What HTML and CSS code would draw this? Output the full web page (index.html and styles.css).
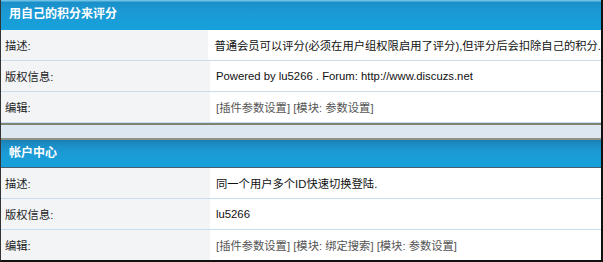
FILE: index.html
```html
<!DOCTYPE html>
<html lang="zh-CN">

<head>
    <meta charset="UTF-8">
    <title>插件列表</title>
    <link rel="stylesheet" href="styles.css">
</head>

<body>
    <div id="main">
        <div class="plugin">
            <h3>用自己的积分来评分</h3>
            <div class="row">
                <div class="label">描述:</div>
                <div class="value">普通会员可以评分(必须在用户组权限启用了评分),但评分后会扣除自己的积分.</div>
            </div>
            <div class="row">
                <div class="label">版权信息:</div>
                <div class="value">Powered by lu5266 . Forum: http://www.discuzs.net</div>
            </div>
            <div class="row">
                <div class="label">编辑:</div>
                <div class="value links">[插件参数设置] [模块: 参数设置]</div>
            </div>
        </div>

        <div class="spacer"></div>

        <div class="plugin second">
            <h3>帐户中心</h3>
            <div class="row">
                <div class="label">描述:</div>
                <div class="value">同一个用户多个ID快速切换登陆.</div>
            </div>
            <div class="row">
                <div class="label">版权信息:</div>
                <div class="value">lu5266</div>
            </div>
            <div class="row last">
                <div class="label">编辑:</div>
                <div class="value links">[插件参数设置] [模块: 绑定搜索] [模块: 参数设置]</div>
            </div>
        </div>
    </div>
</body>

</html>
```

FILE: styles.css
```css
body {
    margin: 0;
    font-family: "Liberation Sans", "Noto Sans CJK SC", sans-serif;
    font-size: 11.3px;
    color: #111;
    background-color: #fff;
}

#main {
    width: 600px;
    height: 260px;
    border-left: 1px solid #333;
    border-right: 2px solid #111;
    border-bottom: 2px solid #111;
    overflow: hidden;
}

.plugin h3 {
    margin: 0;
    height: 30px;
    line-height: 29px;
    padding-left: 8px;
    font-size: 12px;
    font-weight: bold;
    color: #fff;
    background: linear-gradient(#6ec2e6 0, #6ec2e6 1px, #1a8fc8 2px, #1c9ad4 12px, #16a1dc 30px);
}

.second h3 {
    height: 27px;
    line-height: 27px;
    background: linear-gradient(#1b7fb2 0, #1b8cc4 4px, #1c9ad4 12px, #16a1dc 27px);
    border-bottom: 1px solid #4a6070;
}

.row {
    display: flex;
    height: 30px;
    border-bottom: 1px solid #c8def0;
}

.row.last {
    border-bottom: none;
}

.label {
    width: 205px;
    padding-left: 4px;
    background-color: #f2f4f6;
    display: flex;
    align-items: center;
    color: #222;
}

.value {
    flex: 1;
    padding-left: 6px;
    display: flex;
    align-items: center;
    white-space: nowrap;
    color: #111;
}

.links {
    color: #555;
}

.spacer {
    height: 13px;
    border-top: 2px solid #7d8472;
    border-bottom: 2px solid #8e9486;
    background-color: #dde7f2;
}
```
